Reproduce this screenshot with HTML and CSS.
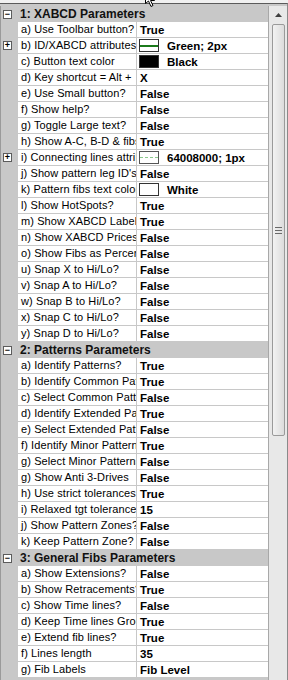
FILE: index.html
```html
<!DOCTYPE html>
<html>
<head>
  <title>Properties</title>
  <link rel="stylesheet" href="styles.css">
</head>
<body>
  <div class="frame">
    <div class="grid">
      <div class="cat"><span class="box">&minus;</span><span class="cat-name">1: XABCD Parameters</span></div>
      <div class="row"><span class="gut"></span><span class="name">a) Use Toolbar button?</span><span class="val">True</span></div>
      <div class="row"><span class="gut"><span class="box">+</span></span><span class="name">b) ID/XABCD attributes</span><span class="val"><span class="sw sw-green"><i></i></span>Green; 2px</span></div>
      <div class="row"><span class="gut"></span><span class="name">c) Button text color</span><span class="val"><span class="sw sw-black"></span>Black</span></div>
      <div class="row"><span class="gut"></span><span class="name">d) Key shortcut = Alt +</span><span class="val">X</span></div>
      <div class="row"><span class="gut"></span><span class="name">e) Use Small button?</span><span class="val">False</span></div>
      <div class="row"><span class="gut"></span><span class="name">f) Show help?</span><span class="val">False</span></div>
      <div class="row"><span class="gut"></span><span class="name">g) Toggle Large text?</span><span class="val">False</span></div>
      <div class="row"><span class="gut"></span><span class="name">h) Show A-C, B-D &amp; fibs</span><span class="val">True</span></div>
      <div class="row"><span class="gut"><span class="box">+</span></span><span class="name">i) Connecting lines attributes</span><span class="val"><span class="sw sw-dash"><i></i></span>64008000; 1px</span></div>
      <div class="row"><span class="gut"></span><span class="name">j) Show pattern leg ID's</span><span class="val">False</span></div>
      <div class="row"><span class="gut"></span><span class="name">k) Pattern fibs text color</span><span class="val"><span class="sw sw-white"></span>White</span></div>
      <div class="row"><span class="gut"></span><span class="name">l) Show HotSpots?</span><span class="val">True</span></div>
      <div class="row"><span class="gut"></span><span class="name">m) Show XABCD Labels</span><span class="val">True</span></div>
      <div class="row"><span class="gut"></span><span class="name">n) Show XABCD Prices</span><span class="val">False</span></div>
      <div class="row"><span class="gut"></span><span class="name">o) Show Fibs as Percent</span><span class="val">False</span></div>
      <div class="row"><span class="gut"></span><span class="name">u) Snap X to Hi/Lo?</span><span class="val">False</span></div>
      <div class="row"><span class="gut"></span><span class="name">v) Snap A to Hi/Lo?</span><span class="val">False</span></div>
      <div class="row"><span class="gut"></span><span class="name">w) Snap B to Hi/Lo?</span><span class="val">False</span></div>
      <div class="row"><span class="gut"></span><span class="name">x) Snap C to Hi/Lo?</span><span class="val">False</span></div>
      <div class="row"><span class="gut"></span><span class="name">y) Snap D to Hi/Lo?</span><span class="val">False</span></div>

      <div class="cat"><span class="box">&minus;</span><span class="cat-name">2: Patterns Parameters</span></div>
      <div class="row"><span class="gut"></span><span class="name">a) Identify Patterns?</span><span class="val">True</span></div>
      <div class="row"><span class="gut"></span><span class="name">b) Identify Common Patterns</span><span class="val">True</span></div>
      <div class="row"><span class="gut"></span><span class="name">c) Select Common Patterns</span><span class="val">False</span></div>
      <div class="row"><span class="gut"></span><span class="name">d) Identify Extended Patterns</span><span class="val">True</span></div>
      <div class="row"><span class="gut"></span><span class="name">e) Select Extended Patterns</span><span class="val">False</span></div>
      <div class="row"><span class="gut"></span><span class="name">f) Identify Minor Patterns</span><span class="val">True</span></div>
      <div class="row"><span class="gut"></span><span class="name">g) Select Minor Patterns</span><span class="val">False</span></div>
      <div class="row"><span class="gut"></span><span class="name">g) Show Anti 3-Drives</span><span class="val">False</span></div>
      <div class="row"><span class="gut"></span><span class="name">h) Use strict tolerances</span><span class="val">True</span></div>
      <div class="row"><span class="gut"></span><span class="name">i) Relaxed tgt tolerance</span><span class="val">15</span></div>
      <div class="row"><span class="gut"></span><span class="name">j) Show Pattern Zones?</span><span class="val">False</span></div>
      <div class="row"><span class="gut"></span><span class="name">k) Keep Pattern Zone?</span><span class="val">False</span></div>

      <div class="cat"><span class="box">&minus;</span><span class="cat-name">3: General Fibs Parameters</span></div>
      <div class="row"><span class="gut"></span><span class="name">a) Show Extensions?</span><span class="val">False</span></div>
      <div class="row"><span class="gut"></span><span class="name">b) Show Retracements?</span><span class="val">True</span></div>
      <div class="row"><span class="gut"></span><span class="name">c) Show Time lines?</span><span class="val">False</span></div>
      <div class="row"><span class="gut"></span><span class="name">d) Keep Time lines Grouped</span><span class="val">True</span></div>
      <div class="row"><span class="gut"></span><span class="name">e) Extend fib lines?</span><span class="val">True</span></div>
      <div class="row"><span class="gut"></span><span class="name">f) Lines length</span><span class="val">35</span></div>
      <div class="row"><span class="gut"></span><span class="name">g) Fib Labels</span><span class="val">Fib Level</span></div>
    </div>

    <div class="scrollbar">
      <div class="arrow">
        <svg width="7" height="4" viewBox="0 0 7 4"><path d="M0 4 L3.5 0 L7 4 Z" fill="#404040"/></svg>
      </div>
      <div class="thumb"><span class="grip"></span></div>
      <div class="track"></div>
    </div>
  </div>

  <svg class="cursor" width="14" height="12" viewBox="0 0 14 12">
    <path d="M0.5 -4 L0.5 3.5 L3.5 1 L6 6.5 L8 5.5 L5.5 0.5 L9.5 0.5 L0.5 -8 Z" fill="#fff" stroke="#000" stroke-width="1"/>
  </svg>
</body>
</html>
```

FILE: styles.css
```css
body {
  margin: 0;
  background-color: #f0f0f0;
  font-family: "Liberation Sans", Arial, sans-serif;
  font-size: 11px;
  color: #000;
  overflow: hidden;
}

.frame {
  display: flex;
  margin-top: 3px;
  border-top: 1px solid #5a5a5a;
  border-right: 1px solid #8a8a8a;
  padding-top: 2px;
  background-color: #c8c8c8;
  height: 680px;
}

.grid {
  flex: 1;
  border-left: 1px solid #9a9a9a;
  background-color: #c8c8c8;
}

.cat {
  display: flex;
  align-items: center;
  height: 16px;
  background-color: #c8c8c8;
}

.cat .box {
  margin-left: 2px;
  margin-right: 8px;
}

.cat-name {
  font-size: 12px;
  font-weight: bold;
  color: #111;
  white-space: nowrap;
}

.row {
  display: flex;
  height: 15px;
  border-bottom: 1px solid #c8c8c8;
}

.gut {
  width: 17px;
  flex: none;
  display: flex;
  align-items: center;
}

.gut .box {
  margin-left: 2px;
}

.box {
  width: 7px;
  height: 7px;
  border: 1px solid #5c5c5c;
  background-color: #fff;
  font-size: 9px;
  line-height: 7px;
  text-align: center;
  font-weight: bold;
  color: #000;
  flex: none;
}

.name {
  width: 115px;
  flex: none;
  padding-left: 3px;
  background-color: #fff;
  border-right: 1px solid #c8c8c8;
  white-space: nowrap;
  overflow: hidden;
  line-height: 15px;
  letter-spacing: 0.1px;
}

.val {
  flex: 1;
  display: flex;
  align-items: center;
  padding-left: 3px;
  background-color: #fff;
  font-size: 11.5px;
  font-weight: bold;
  white-space: nowrap;
  overflow: hidden;
}

.sw {
  width: 18px;
  height: 11px;
  border: 1px solid #333;
  background-color: #fff;
  margin-left: -1px;
  margin-right: 8px;
  display: flex;
  align-items: center;
  flex: none;
}

.sw i {
  display: block;
  width: 100%;
}

.sw-green i {
  height: 2px;
  background-color: #1b7a1b;
}

.sw-dash {
  border-color: #555;
}

.sw-dash i {
  height: 0;
  border-top: 1px dashed #8cc98c;
}

.sw-black {
  background-color: #000;
}

.scrollbar {
  width: 18px;
  flex: none;
  display: flex;
  flex-direction: column;
  border-left: 1px solid #a8a8a8;
  background-color: #e8e8e8;
}

.arrow {
  height: 17px;
  display: flex;
  align-items: center;
  justify-content: center;
}

.thumb {
  height: 410px;
  margin: 1px 2px 0 3px;
  border: 1px solid #9a9a9a;
  border-radius: 2px;
  background: linear-gradient(to right, #f2f2f2, #dcdcdc);
  display: flex;
  align-items: center;
  justify-content: center;
}

.grip {
  width: 7px;
  height: 5px;
  border-top: 1px solid #6a6a6a;
  border-bottom: 1px solid #6a6a6a;
  position: relative;
}

.grip::after {
  content: "";
  position: absolute;
  left: 0;
  right: 0;
  top: 2px;
  border-top: 1px solid #6a6a6a;
}

.track {
  flex: 1;
}

.cursor {
  position: absolute;
  left: 145px;
  top: 0;
}
```
